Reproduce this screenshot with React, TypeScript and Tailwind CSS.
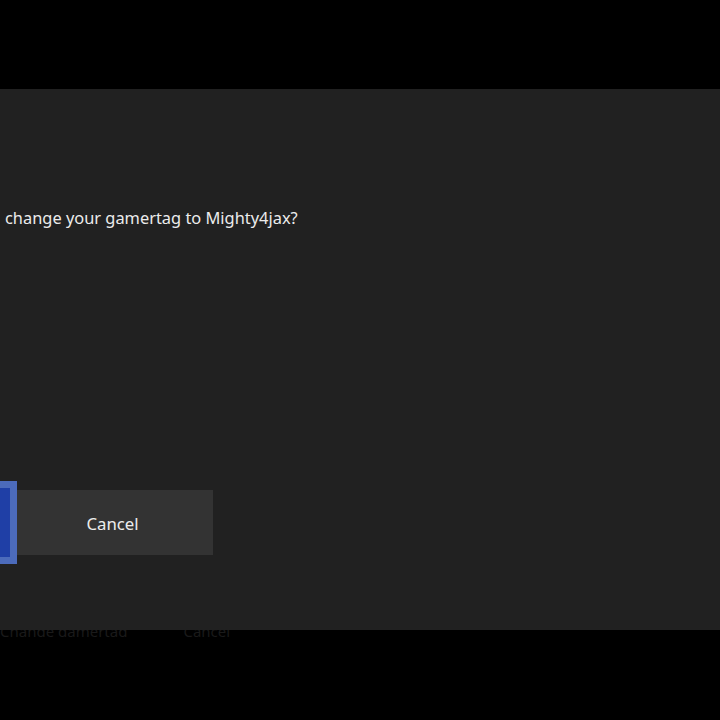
export default function App() {
  return (
    <div className="h-[720px] w-[720px] bg-black flex flex-col overflow-hidden font-['Noto_Sans','Open_Sans',sans-serif]">
      <div className="h-[89px] shrink-0" />
      <div className="h-[541px] shrink-0 bg-[#212121] flex flex-col">
        <p className="pt-[117px] pl-[5px] text-[16.4px] leading-[24px] text-[#ececec]">
          change your gamertag to Mighty4jax?
        </p>
        <div className="mt-[251px] flex items-center">
          <div className="w-[17px] h-[83px] bg-[#1f3fa6] border-[7px] border-l-0 border-[#4c6bbb]" />
          <div className="w-[196px] h-[65px] bg-[#333333] flex items-center justify-center pr-[5px] pt-[3px] text-[16.8px] text-[#ececec]">
            Cancel
          </div>
        </div>
      </div>
      <div className="h-[7px] overflow-hidden flex items-end text-[15px] leading-[16px] text-[#1a1a1a]">
        <div className="flex gap-[56px] -mb-[2px]">
          <span>Change gamertag</span>
          <span>Cancel</span>
        </div>
      </div>
    </div>
  );
}
